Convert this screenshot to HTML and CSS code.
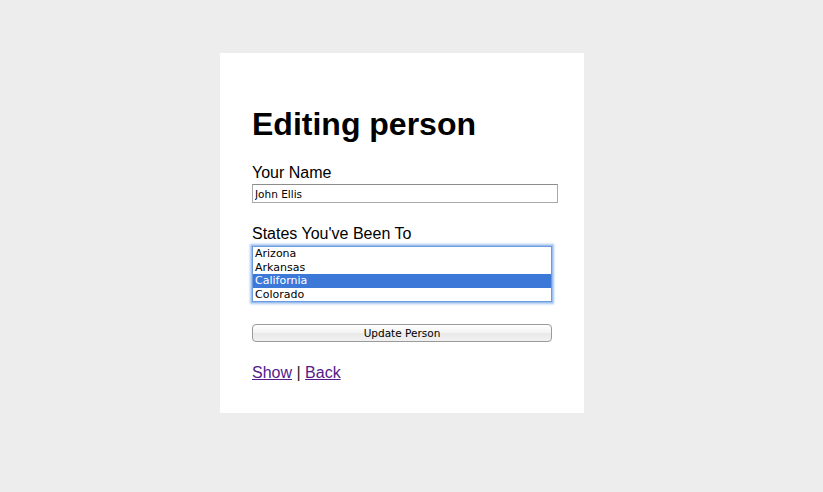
FILE: index.html
```html
<!DOCTYPE html>
<html>
<head>
<meta charset="utf-8">
<title>Editing person</title>
<link rel="stylesheet" href="styles.css">
</head>
<body>
<div class="card">
  <h1 class="title">Editing person</h1>
  <form class="form">
    <div class="field">
      <label class="label" for="name">Your Name</label>
      <input class="text-input" id="name" type="text" value="John Ellis">
    </div>
    <div class="field field-states">
      <label class="label">States You've Been To</label>
      <div class="listbox">
        <div class="option">Arizona</div>
        <div class="option">Arkansas</div>
        <div class="option selected">California</div>
        <div class="option">Colorado</div>
      </div>
    </div>
    <button class="submit" type="button">Update Person</button>
  </form>
  <p class="links"><a class="link" href="#">Show</a> <span class="sep">|</span> <a class="link" href="#">Back</a></p>
</div>
</body>
</html>
```

FILE: styles.css
```css
html, body {
  margin: 0;
  padding: 0;
}
body {
  background: #ededed;
  font-family: "Liberation Sans", Arial, sans-serif;
  color: #000;
  min-height: 492px;
}
.card {
  box-sizing: border-box;
  margin: 53px 0 0 220px;
  width: 364px;
  height: 360px;
  padding: 32px 32px 0 32px;
  background: #fff;
  display: flex;
  flex-direction: column;
}
.title {
  margin: 21px 0 21px 0;
  font-size: 32px;
  line-height: 37px;
  font-weight: bold;
}
.form {
  display: flex;
  flex-direction: column;
  margin: 0;
}
.field {
  display: flex;
  flex-direction: column;
  align-items: flex-start;
}
.field-states {
  margin-top: 22px;
}
.label {
  font-size: 16px;
  line-height: 18px;
}
.text-input {
  box-sizing: border-box;
  margin-top: 2px;
  width: 306px;
  height: 19px;
  padding: 0 2px;
  border: 1px solid #a9a9a9;
  border-top-color: #8c8c8c;
  font-family: "DejaVu Sans", sans-serif;
  font-size: 10.5px;
  color: #000;
  outline: none;
}
.listbox {
  box-sizing: border-box;
  margin-top: 3px;
  width: 300px;
  border: 1px solid #6d9be0;
  box-shadow: 0 0 0 1px #9dbfee, 0 0 2px 2px rgba(95, 150, 225, 0.55);
  display: flex;
  flex-direction: column;
  background: #fff;
}
.option {
  height: 13.5px;
  line-height: 13.5px;
  padding-left: 2px;
  font-family: "DejaVu Sans", sans-serif;
  font-size: 11px;
  color: #000;
}
.option.selected {
  background: #3b78d8;
  color: #fff;
}
.submit {
  box-sizing: border-box;
  margin-top: 22px;
  width: 300px;
  height: 18px;
  padding: 0;
  border: 1px solid #9a9a9a;
  border-radius: 4px;
  background: linear-gradient(#ffffff, #f3f3f3 50%, #e9e9e9 51%, #f1f1f1);
  font-family: "DejaVu Sans", sans-serif;
  font-size: 10.5px;
  color: #000;
  line-height: 16px;
}
.links {
  margin: 21.5px 0 0 0;
  font-size: 16px;
  line-height: 18px;
  color: #222;
}
.link {
  color: #551a8b;
  text-decoration: underline;
}
```
